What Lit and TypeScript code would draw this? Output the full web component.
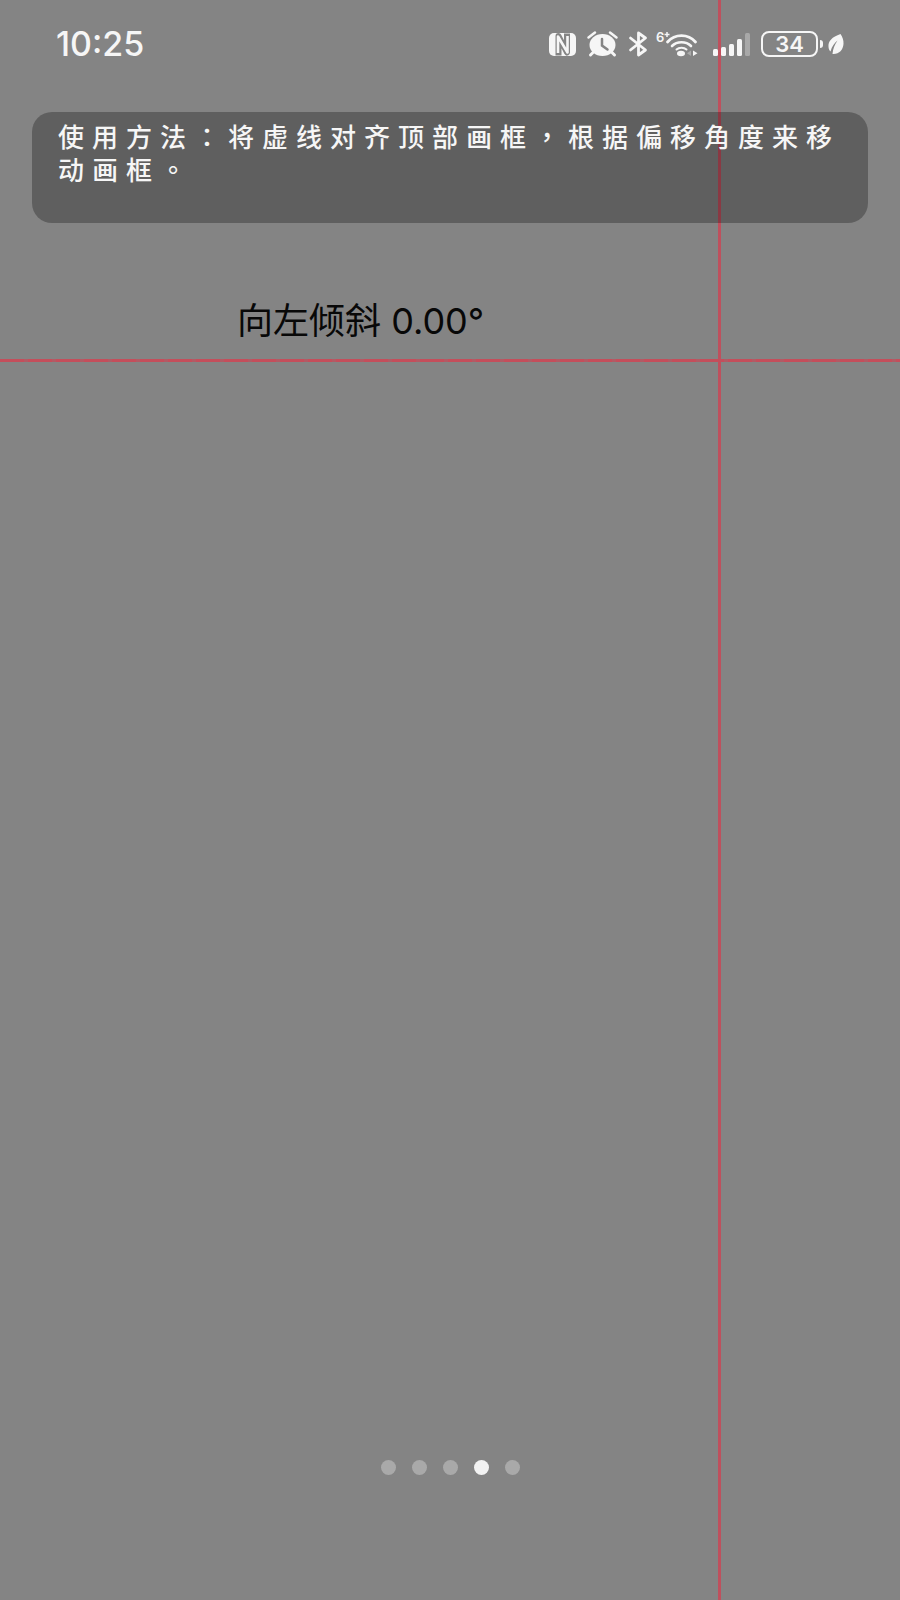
import { LitElement, html, css, svg } from "lit";
import { customElement, state } from "lit/decorators.js";

@customElement("status-bar")
class StatusBar extends LitElement {
  static styles = css`
    :host {
      display: flex;
      align-items: center;
      justify-content: space-between;
      height: 88px;
      padding: 0 56px;
      color: #f6f6f6;
      font-family: Inter, "Noto Sans", sans-serif;
    }
    .time {
      font-size: 34px;
      line-height: 40px;
      font-weight: 500;
    }
    .icons {
      display: flex;
      align-items: center;
      gap: 8px;
    }
    .icons svg {
      display: block;
      flex: none;
      overflow: visible;
    }
    .generation {
      font: 600 13px Inter, sans-serif;
      fill: #f6f6f6;
    }
    .power {
      display: flex;
      align-items: center;
      gap: 2px;
    }
    .battery {
      box-sizing: border-box;
      width: 57px;
      height: 26px;
      border: 2px solid #f6f6f6;
      border-radius: 8px;
      text-align: center;
      font-size: 22px;
      line-height: 22px;
      font-weight: 600;
    }
    .nub {
      width: 3px;
      height: 8px;
      border-radius: 0 3px 3px 0;
      background: #f6f6f6;
      margin-right: 3px;
    }
  `;

  render() {
    return html`
      <span class="time">10:25</span>
      <div class="icons">
        <svg width="30" height="26" viewBox="0 0 30 26" role="img" aria-label="NFC">
          <rect x="0" y="2" width="27" height="23" rx="5" fill="#f6f6f6" />
          <path d="M9.500 24.500V5L18 21.500V2.500" fill="none" stroke="#848484" stroke-width="6" stroke-linejoin="round" />
          <path d="M9 22V5.500L18.500 21.500V5" fill="none" stroke="#f6f6f6" stroke-width="2.600" stroke-linejoin="round" />
        </svg>
        <svg width="34" height="26" viewBox="0 0 34 26" role="img" aria-label="闹钟">
          <ellipse cx="15.500" cy="14" rx="13" ry="11" fill="#f6f6f6" />
          <path d="M1.500 6.500L8 1.500M29.500 6.500L23 1.500" stroke="#f6f6f6" stroke-width="2.500" stroke-linecap="round" />
          <path d="M6.500 21L3.500 24M24.500 21L27.500 24" stroke="#f6f6f6" stroke-width="3" stroke-linecap="round" />
          <path d="M15 8V14.500L20.500 18.500" fill="none" stroke="#848484" stroke-width="2.500" stroke-linecap="round" />
        </svg>
        <svg width="19" height="26" viewBox="0 0 19 26" role="img" aria-label="蓝牙">
          <path d="M1.500 7L16.500 19L9.500 24V2L16.500 7L1.500 19" fill="none" stroke="#f6f6f6" stroke-width="2.800" stroke-linecap="round" stroke-linejoin="round" />
        </svg>
        <svg width="49" height="36" viewBox="0 -4 49 36" role="img" aria-label="Wi-Fi 6">
          <text class="generation" x="0" y="12">6</text>
          <path d="M8.500 4.500H13.500M11 2V7" stroke="#f6f6f6" stroke-width="1.500" />
          <path d="M11.500 12C19 3.500 32 3.500 39.500 12" fill="none" stroke="#f6f6f6" stroke-width="2.800" stroke-linecap="round" />
          <path d="M16 16C21 11 30 11 35 16" fill="none" stroke="#f6f6f6" stroke-width="2.600" stroke-linecap="round" />
          <path d="M20.500 19.500C23 17 28 17 30.500 19.500" fill="none" stroke="#f6f6f6" stroke-width="2" stroke-linecap="round" />
          <ellipse cx="25" cy="23.500" rx="4" ry="2.700" fill="#f6f6f6" />
          <path d="M35 20.500V26L31 23.200Z" fill="#aaa" />
          <path d="M37 20.500V26L41.500 23.200Z" fill="#f6f6f6" />
        </svg>
        <svg width="40" height="26" viewBox="0 0 40 26" role="img" aria-label="信号">
          ${[7, 9, 12, 17].map(
            (h, i) => svg`<rect x=${i * 8} y=${25 - h} width="5" height=${h} rx="1.500" fill="#f6f6f6" />`
          )}
          <rect x="32" y="2" width="5" height="23" rx="1.500" fill="#a8a8a8" />
        </svg>
        <div class="power">
          <div class="battery">34</div>
          <div class="nub"></div>
          <svg width="16" height="22" viewBox="0 0 16 22" role="img" aria-label="省电">
            <path d="M12.500 1C4 4 0 8 .500 14C.700 16 1.500 17.500 2.500 18.500C4 13 6.500 10 9.500 7.500C6.500 12 5 15.500 4.500 21C11 21.500 15 17 15.500 11C15.800 7 14.500 4 12.500 1Z" fill="#f6f6f6" />
          </svg>
        </div>
      </div>
    `;
  }
}

@customElement("app-root")
class AppRoot extends LitElement {
  @state() private page = 3;

  static styles = css`
    :host {
      position: relative;
      display: flex;
      flex-direction: column;
      min-height: 100vh;
      box-sizing: border-box;
      background: #848484;
      font-family: "Noto Sans CJK TC", "Noto Sans CJK SC", sans-serif;
    }
    .plumb {
      position: absolute;
      top: 0;
      bottom: 0;
      left: 80%;
      width: 3px;
      margin-left: -2px;
      background: #bf505d;
    }
    .usage {
      position: relative;
      margin: 24px 32px 0;
      padding: 7px 26px 38px;
      border-radius: 20px;
      background: rgba(0, 0, 0, 0.28);
      color: #f6f6f6;
      font-size: 26px;
      line-height: 33px;
      font-weight: 500;
      letter-spacing: 8px;
    }
    .tilt {
      margin: 76px 0 16px;
      padding: 0 237px;
      color: #080808;
      font-family: Inter, "Noto Sans CJK SC", sans-serif;
      font-size: 36px;
      line-height: 44px;
      font-weight: 400;
      white-space: nowrap;
    }
    .level {
      width: 100%;
      height: 3px;
      margin: 0;
      border: 0;
      background: repeating-linear-gradient(90deg, #c44e5b 0 24px, #b35a64 24px 28px);
    }
    .pager {
      display: flex;
      justify-content: center;
      gap: 16px;
      margin-top: auto;
      padding-bottom: 125px;
    }
    .dot {
      width: 15px;
      height: 15px;
      padding: 0;
      border: 0;
      border-radius: 50%;
      background: #a9a9a9;
    }
    .dot.current {
      background: #f2f2f2;
    }
  `;

  render() {
    return html`
      <div class="plumb"></div>
      <status-bar></status-bar>
      <section class="usage" lang="zh-Hant">使用方法：将虚线对齐顶部画框，根据偏移角度来移动画框。</section>
      <div class="tilt" lang="zh-Hans">向左倾斜 0.00°</div>
      <hr class="level" />
      <nav class="pager">
        ${[0, 1, 2, 3, 4].map(
          (i) => html`<button
            class=${i === this.page ? "dot current" : "dot"}
            aria-label=${`第 ${i + 1} 页`}
            @click=${() => (this.page = i)}
          ></button>`
        )}
      </nav>
    `;
  }
}
